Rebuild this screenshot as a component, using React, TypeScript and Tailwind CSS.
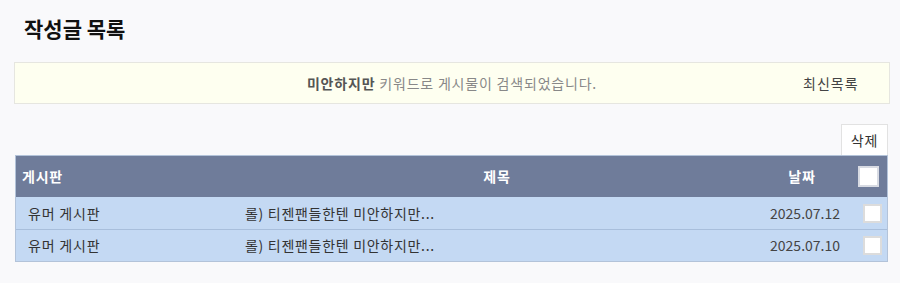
import React from 'react';

const posts = [
  { board: '유머 게시판', title: '롤) 티젠팬들한텐 미안하지만...', date: '2025.07.12' },
  { board: '유머 게시판', title: '롤) 티젠팬들한텐 미안하지만...', date: '2025.07.10' },
];

const cols = 'grid grid-cols-[215px_532px_88px_1fr]';

export default function App() {
  return (
    <div
      className="min-h-[283px] w-[900px] bg-[#f9f9fb] text-[#333]"
      style={{ fontFamily: '"Noto Sans CJK KR", "Noto Sans", sans-serif' }}
    >
      {/* Header */}
      <div className="px-[24px] pt-[13px] h-[62px]">
        <h1 className="text-[21px] font-bold text-[#111] leading-[30px]">작성글 목록</h1>
      </div>

      {/* Notice */}
      <div className="mx-[14px] w-[876px] h-[42px] border border-[#e6e6e0] bg-[#fefff0] flex items-center text-[14px] tracking-[0.8px]">
        <div className="flex-1 text-center pl-[86px]">
          <span className="font-bold text-[#555]">미안하지만</span>
          <span className="text-[#888]"> 키워드로 게시물이 검색되었습니다.</span>
        </div>
        <div className="w-[86px] text-[#444] tracking-[1px]">최신목록</div>
      </div>

      {/* Delete button */}
      <div className="flex justify-end pr-[12px] mt-[20px]">
        <button className="w-[47px] h-[31px] bg-white border border-[#e2e2e2] border-b-0 text-[14px] tracking-[0.8px] text-[#333]">
          삭제
        </button>
      </div>

      {/* Table */}
      <div className="mx-[15px] w-[873px] border border-[#b3c3d9] text-[14px]">
        <div className={`${cols} h-[41px] bg-[#6f7c9a] text-white font-bold items-center tracking-[0.8px]`}>
          <div className="pl-[6px]">게시판</div>
          <div className="text-center">제목</div>
          <div className="text-center pr-[10px]">날짜</div>
          <div className="flex justify-start pl-[7px]">
            <span className="w-[21px] h-[21px] bg-white border-2 border-[#d8dbe3]" />
          </div>
        </div>
        {posts.map((p, i) => (
          <div
            key={i}
            className={`${cols} h-[32px] bg-[#c4d9f3] items-center text-[#333] ${i > 0 ? 'border-t border-[#a8bedb]' : ''}`}
          >
            <div className="pl-[12px] tracking-[0.8px]">{p.board}</div>
            <div className="pl-[14px] tracking-[0.7px]">{p.title}</div>
            <div className="text-right pr-[11px] text-[#444]">{p.date}</div>
            <div className="flex justify-start pl-[12px]">
              <span className="w-[19px] h-[19px] bg-white border-2 border-[#dcdcdc]" />
            </div>
          </div>
        ))}
      </div>
    </div>
  );
}
